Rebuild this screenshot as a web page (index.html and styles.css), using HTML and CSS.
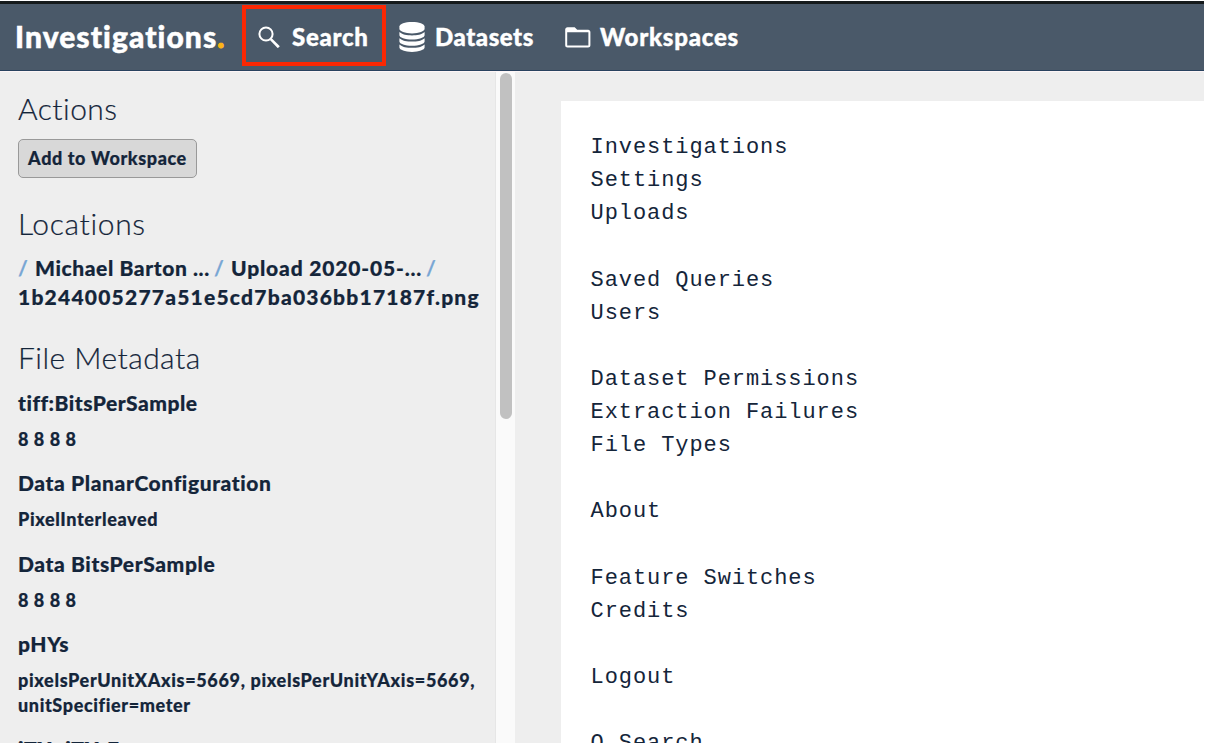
FILE: index.html
```html
<!DOCTYPE html>
<html lang="en">
<head>
<meta charset="utf-8">
<title>Investigations</title>
<link rel="stylesheet" href="styles.css">
</head>
<body>
<div class="app">
  <header class="header">
    <a class="brand"><span class="t-brand">Investigations</span><span class="brand-dot">.</span></a>
    <nav class="nav">
      <a class="nav-item nav-search">
        <svg class="icon-search" viewBox="0 0 22 22" width="22" height="22"><circle cx="8" cy="8" r="6.600" fill="none" stroke="#fff" stroke-width="2"/><path d="M12.400 12.400h1.600L21.800 20.200l-2 2-7.400-7.800z" fill="#fff"/></svg>
        <span class="t-search">Search</span>
      </a>
      <a class="nav-item nav-datasets">
        <svg class="icon-db" viewBox="0 0 26 30" width="26" height="30" fill="#fff"><path d="M13 0c7 0 12.600 2.100 12.600 4.600v2.200c0 2.500-5.600 4.600-12.600 4.600S.4 9.300.4 6.800V4.600C.4 2.100 6 0 13 0z"/><path d="M.4 10c2.600 2.500 7.600 3.400 12.600 3.400s10-.9 12.600-3.400v3.200c0 2.300-5.600 4.300-12.600 4.300S.4 15.500.4 13.200z"/><path d="M.4 16.200c2.600 2.500 7.600 3.400 12.600 3.400s10-.9 12.600-3.400v3.200c0 2.300-5.600 4.300-12.600 4.300S.4 21.700.4 19.400z"/><path d="M.4 22.400c2.600 2.500 7.600 3.400 12.600 3.400s10-.9 12.600-3.400v3.200c0 2.300-5.600 4.300-12.600 4.300S.4 27.900.4 25.600z"/></svg>
        <span class="t-datasets">Datasets</span>
      </a>
      <a class="nav-item nav-workspaces">
        <svg class="icon-folder" viewBox="0 0 26 21" width="26" height="21"><path fill="#fff" fill-rule="evenodd" d="M2.500.2h7.200l2.500 2.600h10.900c1.300 0 2.300 1 2.300 2.300v13.100c0 1.300-1 2.300-2.300 2.300H2.500c-1.300 0-2.300-1-2.300-2.300V2.500C.2 1.200 1.200.2 2.500.2zM2.200 5.300v13.200h21.200V5.300z"/></svg>
        <span class="t-workspaces">Workspaces</span>
      </a>
    </nav>
  </header>
  <div class="main">
    <aside class="sidebar">
      <h2 class="heading"><span class="t-actions">Actions</span></h2>
      <button class="button"><span class="t-add">Add to Workspace</span></button>
      <h2 class="heading heading-locations"><span class="t-locations">Locations</span></h2>
      <div class="path">
        <div class="crumbs"><span class="slash">/</span><span class="crumb-user">Michael Barton ...</span><span class="slash">/</span><span class="crumb-upload">Upload 2020-05-...</span><span class="slash">/</span></div>
        <div><span class="file">1b244005277a51e5cd7ba036bb17187f.png</span></div>
      </div>
      <h2 class="heading heading-metadata"><span class="t-metadata">File Metadata</span></h2>
      <dl class="metadata">
        <dt><span class="k-tiff">tiff:BitsPerSample</span></dt><dd><span class="v-bits">8 8 8 8</span></dd>
        <dt><span class="k-planar">Data PlanarConfiguration</span></dt><dd><span class="v-pixel">PixelInterleaved</span></dd>
        <dt><span class="k-bits">Data BitsPerSample</span></dt><dd><span class="v-bits">8 8 8 8</span></dd>
        <dt><span class="k-phys">pHYs</span></dt><dd><span class="v-phys">pixelsPerUnitXAxis=5669, pixelsPerUnitYAxis=5669,</span><br><span class="v-unit">unitSpecifier=meter</span></dd>
        <dt><span class="k-itxt">iTXt iTXtE</span></dt>
      </dl>
    </aside>
    <div class="scroll-track"><div class="scroll-thumb"></div></div>
    <section class="viewer">
<pre class="document">Investigations
Settings
Uploads

Saved Queries
Users

Dataset Permissions
Extraction Failures
File Types

About

Feature Switches
Credits

Logout

Q Search</pre>
    </section>
  </div>
</div>
</body>
</html>
```
FILE: styles.css
```css
* { box-sizing: border-box; }
body { margin: 0; background: #fff; color: #14253a; font-family: Lato, sans-serif; font-variant-ligatures: none; overflow: hidden; }
.app { width: 1204px; height: 743px; overflow: hidden; display: flex; flex-direction: column; border-top: 1px solid #fff; }
.header { flex: none; height: 70px; display: flex; align-items: center; background: #4a5969; border-top: 3px solid #151a1c; border-bottom: 1px solid #29425f; color: #fff; font-weight: 900; padding-left: 15px; }
.brand { width: 227px; padding-bottom: 2px; font-size: 30px; letter-spacing: 1.070px; white-space: nowrap; -webkit-text-stroke: 0.500px; }
.brand-dot { color: #fdb515; -webkit-text-stroke: 1px; }
.nav { display: flex; align-items: center; font-size: 24px; height: 66px; -webkit-text-stroke: 0.400px; }
.nav-item { display: flex; align-items: center; white-space: nowrap; }
.nav-search { width: 144px; height: 61px; border: 4px solid #fb2804; padding-left: 12px; gap: 12px; align-self: flex-start; margin-top: 1px; }
.icon-search { position: relative; top: 1px; }
.nav-datasets { width: 179px; padding-left: 13px; gap: 10px; }
.nav-workspaces { gap: 9px; }
.t-search { letter-spacing: 0.700px; padding-top: 2px; }
.t-datasets { letter-spacing: 0.550px; padding-bottom: 2px; }
.t-workspaces { letter-spacing: 0.750px; padding-bottom: 2px; }
.main { flex: 1; min-height: 0; display: flex; border-top: 1px solid #fdf5f6; background: #eee; }
.sidebar { width: 496px; flex: none; padding: 18px 0 0 18px; border-right: 1px solid #e6e6e6; overflow: hidden; }
.heading { margin: 0; font-size: 30px; line-height: 36px; font-weight: 300; letter-spacing: 0.450px; -webkit-text-stroke: 0.200px; }
.t-locations { letter-spacing: 0.650px; }
.button { display: flex; align-items: center; justify-content: center; width: 179px; height: 39px; margin-top: 13px; padding: 0 0 2px; border: 1px solid #999; border-radius: 5px; background: #d8d8d8; color: inherit; font: 900 18px Lato, sans-serif; letter-spacing: 0.600px; white-space: nowrap; -webkit-text-stroke: 0.200px; }
.heading-locations { margin-top: 27px; }
.path { margin-top: 12px; font-size: 21px; line-height: 29px; font-weight: 900; white-space: nowrap; -webkit-text-stroke: 0.200px; }
.crumbs { display: flex; }
.slash { color: #78a6d4; font-weight: 700; width: 17px; }
.crumb-user { width: 179px; letter-spacing: 0.600px; }
.crumb-upload { width: 195px; letter-spacing: 0.830px; }
.file { letter-spacing: 1.220px; }
.heading-metadata { margin-top: 28px; }
.metadata { margin: 11px 0 0; font-weight: 900; white-space: nowrap; -webkit-text-stroke: 0.200px; }
dt { font-size: 21px; line-height: 34px; letter-spacing: 0.600px; }
dd { margin: 7px 0 14px; font-size: 18px; line-height: 25.300px; letter-spacing: 0.620px; }
.k-tiff { letter-spacing: 0.500px; }
.v-bits { letter-spacing: 0.550px; }
.v-phys { letter-spacing: 0.660px; }
.scroll-track { width: 19px; flex: none; padding: 1px 0 0 4px; background: #fafafa; }
.scroll-thumb { width: 12px; height: 346px; border-radius: 6px; background: #c1c1c1; }
.viewer { flex: 1; padding: 29px 0 0 46px; }
.document { margin: 0; height: 700px; padding: 30px 29.500px; background: #fff; font: 22px/33.130px "Liberation Mono", "Courier New", monospace; letter-spacing: 0.930px; }
```
